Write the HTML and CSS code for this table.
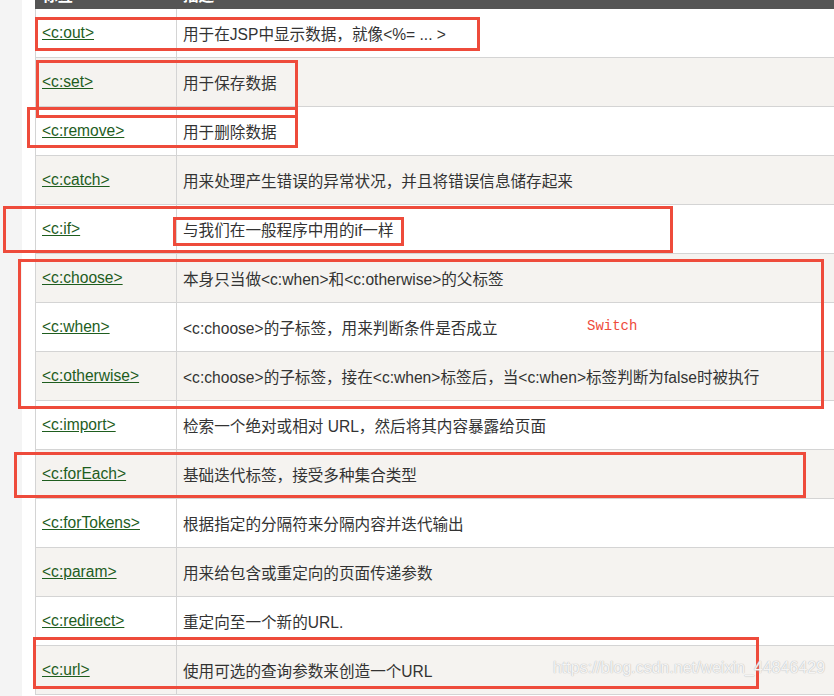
FILE: index.html
```html
<!DOCTYPE html>
<html lang="zh-CN">
<head>
<meta charset="utf-8">
<link rel="stylesheet" href="styles.css">
</head>
<body>
<div class="page">
  <div class="rail"></div>
  <div class="content">
    <table class="tags">
      <thead>
        <tr><th class="c1">标签</th><th>描述</th></tr>
      </thead>
      <tbody>
        <tr><td class="c1"><a href="#">&lt;c:out&gt;</a></td><td>用于在JSP中显示数据，就像&lt;%= ... &gt;</td></tr>
        <tr><td class="c1"><a href="#">&lt;c:set&gt;</a></td><td>用于保存数据</td></tr>
        <tr><td class="c1"><a href="#">&lt;c:remove&gt;</a></td><td>用于删除数据</td></tr>
        <tr><td class="c1"><a href="#">&lt;c:catch&gt;</a></td><td>用来处理产生错误的异常状况，并且将错误信息储存起来</td></tr>
        <tr><td class="c1"><a href="#">&lt;c:if&gt;</a></td><td>与我们在一般程序中用的if一样</td></tr>
        <tr><td class="c1"><a href="#">&lt;c:choose&gt;</a></td><td>本身只当做&lt;c:when&gt;和&lt;c:otherwise&gt;的父标签</td></tr>
        <tr><td class="c1"><a href="#">&lt;c:when&gt;</a></td><td>&lt;c:choose&gt;的子标签，用来判断条件是否成立</td></tr>
        <tr><td class="c1"><a href="#">&lt;c:otherwise&gt;</a></td><td>&lt;c:choose&gt;的子标签，接在&lt;c:when&gt;标签后，当&lt;c:when&gt;标签判断为false时被执行</td></tr>
        <tr><td class="c1"><a href="#">&lt;c:import&gt;</a></td><td>检索一个绝对或相对 URL，然后将其内容暴露给页面</td></tr>
        <tr><td class="c1"><a href="#">&lt;c:forEach&gt;</a></td><td>基础迭代标签，接受多种集合类型</td></tr>
        <tr><td class="c1"><a href="#">&lt;c:forTokens&gt;</a></td><td>根据指定的分隔符来分隔内容并迭代输出</td></tr>
        <tr><td class="c1"><a href="#">&lt;c:param&gt;</a></td><td>用来给包含或重定向的页面传递参数</td></tr>
        <tr><td class="c1"><a href="#">&lt;c:redirect&gt;</a></td><td>重定向至一个新的URL.</td></tr>
        <tr><td class="c1"><a href="#">&lt;c:url&gt;</a></td><td>使用可选的查询参数来创造一个URL</td></tr>
      </tbody>
    </table>
  </div>

  <div class="mark" style="left:35px;top:17px;width:445px;height:34px"></div>
  <div class="mark" style="left:36px;top:60px;width:262px;height:58px"></div>
  <div class="mark" style="left:27px;top:107px;width:271px;height:41px"></div>
  <div class="mark" style="left:3px;top:206px;width:670px;height:47px"></div>
  <div class="mark" style="left:173px;top:217px;width:231px;height:29px"></div>
  <div class="mark" style="left:18px;top:259px;width:806px;height:150px"></div>
  <div class="mark" style="left:14px;top:452px;width:792px;height:46px"></div>
  <div class="mark" style="left:33px;top:637px;width:726px;height:52px"></div>

  <div class="note">Switch</div>
  <div class="watermark">https://blog.csdn.net/weixin_44846429</div>
</div>
</body>
</html>
```

FILE: styles.css
```css
html, body {
  margin: 0;
  padding: 0;
  background: #ffffff;
}

.page {
  position: relative;
  width: 834px;
  height: 696px;
  overflow: hidden;
  display: flex;
  font-family: "Liberation Sans", Arial, "Noto Sans CJK SC", sans-serif;
  font-size: 15.6px;
  color: #333333;
}

.rail {
  width: 22px;
  flex: none;
  background: #f4f4f4;
}

.content {
  flex: none;
  width: 812px;
  padding-left: 13px;
  box-sizing: border-box;
  background: #ffffff;
}

.tags {
  border-collapse: collapse;
  width: 820px;
  margin-top: -33px;
  table-layout: fixed;
}

.tags th {
  background: #555555;
  color: #ffffff;
  height: 37px;
  padding: 0 6px 3px;
  line-height: 18px;
  vertical-align: bottom;
  text-align: left;
  font-weight: bold;
  border: 1px solid #555555;
}

.tags td {
  height: 48px;
  padding: 0 6px;
  border: 1px solid #d4d4d4;
  vertical-align: middle;
  white-space: nowrap;
}

.tags .c1 {
  width: 128px;
}

.tags tbody tr:nth-child(even) td {
  background: #f5f3f0;
}

.tags a {
  color: #1e5d1e;
  text-decoration: underline;
}

.mark {
  position: absolute;
  border: 3px solid #ee4b3b;
  box-sizing: border-box;
}

.note {
  position: absolute;
  left: 587px;
  top: 318px;
  color: #ee4b3b;
  font-family: "Liberation Mono", "DejaVu Sans Mono", monospace;
  font-size: 14px;
}

.watermark {
  position: absolute;
  left: 553px;
  top: 659px;
  font-family: "Liberation Sans", Arial, sans-serif;
  font-size: 16px;
  color: rgba(255, 255, 255, 0.85);
  text-shadow: 0 0 1px #b8b8b8, 0 0 1px #c8c8c8;
}
```
